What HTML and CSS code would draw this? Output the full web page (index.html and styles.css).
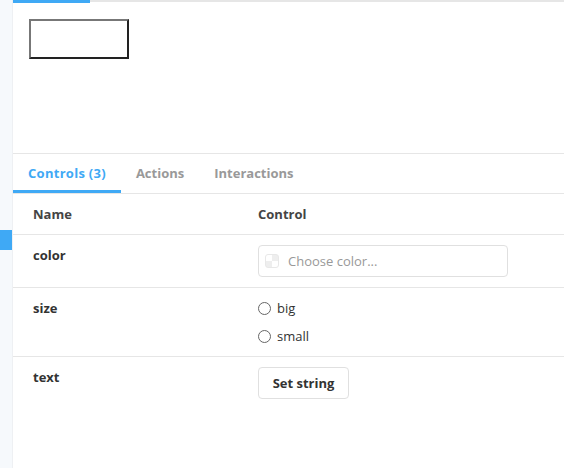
FILE: index.html
```html
<!DOCTYPE html>
<html>
<head>
<meta charset="utf-8">
<link rel="stylesheet" href="styles.css">
</head>
<body>
<div class="app">
  <div class="sidebar">
    <div class="side-marker"></div>
  </div>
  <div class="main">
    <div class="topbar"><div class="topbar-active"></div></div>
    <div class="preview">
      <div class="demo-box"></div>
    </div>
    <div class="tabs">
      <div class="tab active">Controls (3)</div>
      <div class="tab">Actions</div>
      <div class="tab">Interactions</div>
    </div>
    <div class="table">
      <div class="row head">
        <div class="cell-name">Name</div>
        <div class="cell-ctrl">Control</div>
      </div>
      <div class="row">
        <div class="cell-name label">color</div>
        <div class="cell-ctrl">
          <div class="color-input">
            <span class="swatch"></span>
            <span class="placeholder">Choose color...</span>
          </div>
        </div>
      </div>
      <div class="row">
        <div class="cell-name label">size</div>
        <div class="cell-ctrl radios">
          <label class="radio"><span class="circle"></span>big</label>
          <label class="radio"><span class="circle"></span>small</label>
        </div>
      </div>
      <div class="row last">
        <div class="cell-name label">text</div>
        <div class="cell-ctrl">
          <button class="btn">Set string</button>
        </div>
      </div>
    </div>
  </div>
</div>
</body>
</html>
```
FILE: styles.css
```css
* { box-sizing: border-box; }
html, body { margin: 0; padding: 0; }
body {
  width: 564px;
  height: 468px;
  overflow: hidden;
  font-family: "Open Sans", "Liberation Sans", sans-serif;
  font-size: 13px;
  color: #333;
  background: #fff;
}
.app { display: flex; height: 468px; }
.sidebar {
  width: 13px;
  flex: none;
  background: #f6f9fc;
  border-right: 1px solid #eef0f3;
  padding-top: 230px;
}
.side-marker { width: 12px; height: 20px; background: #3fa9f5; }
.main { flex: 1; display: flex; flex-direction: column; }
.topbar {
  height: 3px;
  border-top: 2px solid #e6e6e6;
  position: relative;
}
.topbar-active {
  position: absolute;
  left: 0; top: -2px;
  width: 77px; height: 3px;
  background: #3fa9f5;
}
.preview {
  height: 150px;
  padding: 16px 16px;
}
.demo-box {
  width: 100px;
  height: 40px;
  border: 2px solid;
  border-color: #777 #222 #222 #777;
  background: #fff;
}
.tabs {
  display: flex;
  height: 41px;
  border-top: 1px solid #e6e6e6;
  border-bottom: 1px solid #e6e6e6;
}
.tab {
  padding: 3px 15px 0;
  font-weight: 700;
  color: #999;
  line-height: 33px;
  border-bottom: 3px solid transparent;
}
.tab.active {
  color: #3fa9f5;
  border-bottom-color: #3fa9f5;
  letter-spacing: 0.28px;
}
.row {
  display: flex;
  padding: 10px 20px;
  border-bottom: 1px solid #e6e6e6;
}
.row.last { border-bottom: none; }
.row.head { font-weight: 700; color: #444; }
.cell-name { width: 225px; flex: none; line-height: 20px; }
.label { font-weight: 700; color: #333; }
.cell-ctrl { flex: 1; line-height: 20px; }
.color-input {
  width: 250px;
  height: 32px;
  border: 1px solid #e0e0e0;
  border-radius: 4px;
  display: flex;
  align-items: center;
  padding-left: 6px;
  gap: 9px;
}
.swatch {
  width: 14px; height: 14px;
  border-radius: 3px;
  border: 1px solid #e8e8e8;
  background-color: #fff;
  background-image:
    linear-gradient(45deg, #eee 25%, transparent 25%, transparent 75%, #eee 75%),
    linear-gradient(45deg, #eee 25%, transparent 25%, transparent 75%, #eee 75%);
  background-size: 12px 12px;
  background-position: 0 0, 6px 6px;
}
.placeholder { color: #999; }
.radios { display: flex; flex-direction: column; gap: 8px; }
.radio { display: flex; align-items: center; gap: 6px; color: #333; }
.circle {
  width: 13px; height: 13px;
  border: 1px solid #666;
  border-radius: 50%;
  background: #fff;
}
.btn {
  font-family: inherit;
  font-size: 13px;
  font-weight: 700;
  color: #333;
  background: #fff;
  border: 1px solid #e0e0e0;
  border-radius: 4px;
  width: 91px;
  height: 32px;
  padding: 0;
}
```
